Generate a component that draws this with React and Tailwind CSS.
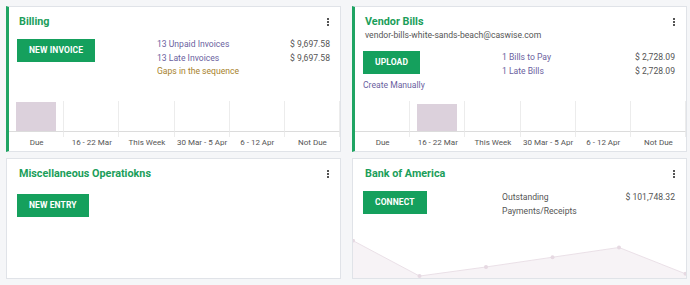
import React from 'react';

const cols = ['Due', '16 - 22 Mar', 'This Week', '30 Mar - 5 Apr', '6 - 12 Apr', 'Not Due'];

function Kebab() {
  return (
    <div className="flex flex-col gap-[1px] pt-[3px]">
      <span className="w-[2px] h-[2px] bg-[#555]" />
      <span className="w-[2px] h-[2px] bg-[#555]" />
      <span className="w-[2px] h-[2px] bg-[#555]" />
    </div>
  );
}

function Button({ children }) {
  return (
    <button className="h-[23px] px-[12px] bg-[#15a05d] text-white text-[8.5px] font-bold tracking-[0.1px] uppercase">
      {children}
    </button>
  );
}

// bar chart at the bottom of billing / vendor cards
function BarChart({ barIndex, barHeight }) {
  return (
    <div className="grid grid-cols-6">
      {cols.map((label, i) => (
        <div key={label} className="flex flex-col">
          <div className="h-[31px] border-r border-b border-r-[#ececec] border-b-[#dcdcdc] flex items-end justify-center">
            {i === barIndex && <div className="w-[40px] bg-[#dcd1dc]" style={{ height: barHeight }} />}
          </div>
          <div className="h-[5px] border-r border-[#ececec]" />
          <div className="h-[14px] text-center text-[8px] leading-[11px] text-[#555] whitespace-nowrap">{label}</div>
        </div>
      ))}
    </div>
  );
}

function Stat({ label, amount, color = 'text-[#6b5fa0]' }) {
  return (
    <div className="flex justify-between">
      <span className={color}>{label}</span>
      {amount && <span className="text-[#555]">{amount}</span>}
    </div>
  );
}

function Card({ title, accent, children }) {
  return (
    <div
      className={`bg-white border border-[#e0e3e8] flex flex-col ${
        accent ? 'border-l-[3px] border-l-[#1fa463] pl-[8px]' : 'pl-[10px]'
      }`}
    >
      <div className="flex justify-between items-start pt-[8px] pr-[11px] pl-[2px]">
        <h2 className="text-[10.8px] leading-[14px] font-bold text-[#1b9e5a]">{title}</h2>
        <Kebab />
      </div>
      {children}
    </div>
  );
}

export default function App() {
  return (
    <div
      className="min-h-screen bg-[#f5f6f8] pl-[6px] pr-[3px] pt-[6px] grid grid-cols-2 grid-rows-[146px_121px] gap-x-[11px] gap-y-[6px]"
      style={{ fontFamily: 'Roboto, "Liberation Sans", sans-serif' }}
    >
      {/* Billing */}
      <Card title="Billing" accent>
        <div className="flex mt-[10px] pr-[10px] text-[8.6px] leading-[13.5px]">
          <div className="w-[140px] shrink-0">
            <Button>New Invoice</Button>
          </div>
          <div className="flex-1 -mt-[1px]">
            <Stat label="13 Unpaid Invoices" amount="$ 9,697.58" />
            <Stat label="13 Late Invoices" amount="$ 9,697.58" />
            <Stat label="Gaps in the sequence" color="text-[#a8822c]" />
          </div>
        </div>
        <div className="mt-auto -ml-[8px]">
          <BarChart barIndex={0} barHeight={29} />
        </div>
      </Card>

      {/* Vendor Bills */}
      <Card title="Vendor Bills" accent>
        <div className="pl-[2px] text-[8.6px] leading-[12px] text-[#555]">
          vendor-bills-white-sands-beach@caswise.com
        </div>
        <div className="flex mt-[10px] pr-[11px] text-[8.6px] leading-[13.5px]">
          <div className="w-[139px] shrink-0 flex flex-col items-start">
            <Button>Upload</Button>
            <span className="mt-[5px] text-[#6b5fa0] leading-[12px]">Create Manually</span>
          </div>
          <div className="flex-1">
            <Stat label="1 Bills to Pay" amount="$ 2,728.09" />
            <Stat label="1 Late Bills" amount="$ 2,728.09" />
          </div>
        </div>
        <div className="mt-auto -ml-[8px]">
          <BarChart barIndex={1} barHeight={27} />
        </div>
      </Card>

      {/* Misc */}
      <Card title="Miscellaneous Operatiokns">
        <div className="mt-[10px]">
          <Button>New Entry</Button>
        </div>
      </Card>

      {/* Bank */}
      <Card title="Bank of America">
        <div className="flex mt-[10px] pr-[11px] text-[8.6px] leading-[13.5px] text-[#555]">
          <div className="w-[139px] shrink-0">
            <Button>Connect</Button>
          </div>
          <div className="flex-1 flex justify-between">
            <span className="w-[90px]">Outstanding Payments/Receipts</span>
            <span>$ 101,748.32</span>
          </div>
        </div>
        <div className="mt-auto -ml-[10px]">
          <svg viewBox="0 0 333 40" className="block w-full h-[39px]" preserveAspectRatio="none">
            <path d="M0 1.7 L66.5 38 L133 28.7 L199.5 18.7 L266 8.7 L332.5 35.7 L333 40 L0 40 Z" fill="#f7f3f6" />
            <path d="M0 1.7 L66.5 38 L133 28.7 L199.5 18.7 L266 8.7 L332.5 35.7" fill="none" stroke="#eadfe7" strokeWidth="1" />
            {[[0, 1.7], [66.5, 38], [133, 28.7], [199.5, 18.7], [266, 8.7], [332.5, 35.7]].map(([x, y]) => (
              <circle key={x} cx={x} cy={y} r="2" fill="#e6d9e2" />
            ))}
          </svg>
        </div>
      </Card>
    </div>
  );
}
